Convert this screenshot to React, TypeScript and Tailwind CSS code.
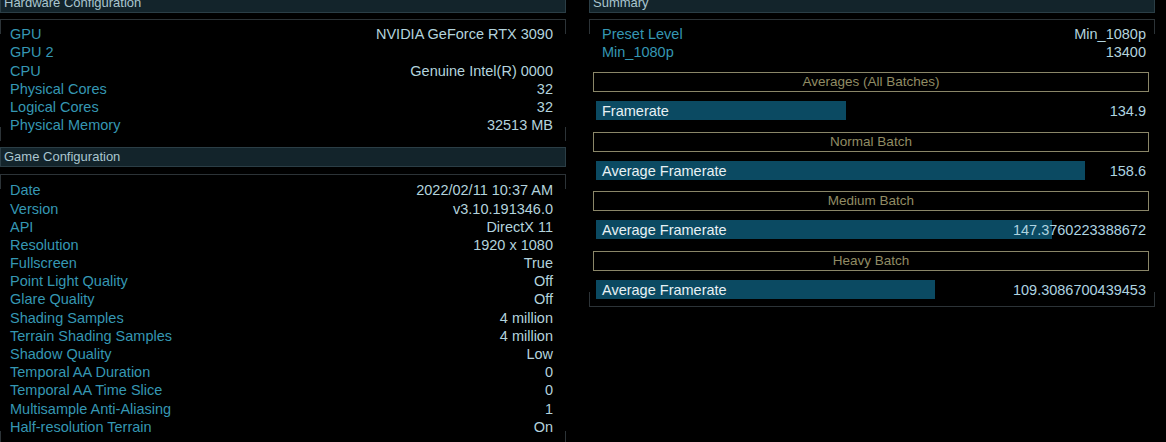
import type { ReactNode } from 'react';

type Row = [string, string];

const hardware: Row[] = [
  ['GPU', 'NVIDIA GeForce RTX 3090'],
  ['GPU 2', ''],
  ['CPU', 'Genuine Intel(R) 0000'],
  ['Physical Cores', '32'],
  ['Logical Cores', '32'],
  ['Physical Memory', '32513 MB'],
];

const game: Row[] = [
  ['Date', '2022/02/11 10:37 AM'],
  ['Version', 'v3.10.191346.0'],
  ['API', 'DirectX 11'],
  ['Resolution', '1920 x 1080'],
  ['Fullscreen', 'True'],
  ['Point Light Quality', 'Off'],
  ['Glare Quality', 'Off'],
  ['Shading Samples', '4 million'],
  ['Terrain Shading Samples', '4 million'],
  ['Shadow Quality', 'Low'],
  ['Temporal AA Duration', '0'],
  ['Temporal AA Time Slice', '0'],
  ['Multisample Anti-Aliasing', '1'],
  ['Half-resolution Terrain', 'On'],
];

const batches = [
  { title: 'Averages (All Batches)', label: 'Framerate', value: '134.9', bar: 'w-[250px]' },
  { title: 'Normal Batch', label: 'Average Framerate', value: '158.6', bar: 'w-[489px]' },
  { title: 'Medium Batch', label: 'Average Framerate', value: '147.3760223388672', bar: 'w-[456px]' },
  { title: 'Heavy Batch', label: 'Average Framerate', value: '109.3086700439453', bar: 'w-[339px]' },
];

const Header = ({ title }: { title: string }) => (
  <div className="h-[20px] border border-[#2b3e46] bg-[#13242b] pl-[3px] text-[13px] leading-[18px] text-[#aac6cf]">
    {title}
  </div>
);

// top edge plus short corner ticks on the sides
const Panel = ({ children, bottom = false }: { children: ReactNode; bottom?: boolean }) => (
  <div
    className={`relative border-t border-[#2c3337] ${bottom ? 'border-b' : ''}
      before:absolute before:left-0 before:top-0 before:h-[14px] before:w-px before:bg-[#2c3337]
      after:absolute after:right-0 after:top-0 after:h-[14px] after:w-px after:bg-[#2c3337]`}
  >
    {children}
    <div className="absolute bottom-0 left-0 h-[14px] w-px bg-[#2c3337]" />
    <div className="absolute bottom-0 right-0 h-[14px] w-px bg-[#2c3337]" />
  </div>
);

const Rows = ({ rows }: { rows: Row[] }) => (
  <div className="flex flex-col">
    {rows.map(([label, value]) => (
      <div key={label} className="flex h-[18.2px] items-center justify-between text-[14.5px]">
        <span className="text-[#3597b3]">{label}</span>
        <span className="text-[#b3d3dd]">{value}</span>
      </div>
    ))}
  </div>
);

export default function App() {
  return (
    <div className="h-[442px] overflow-hidden bg-black font-['Liberation_Sans',Arial,sans-serif]">
      <div className="-mt-[7px] flex gap-[23px] pr-[11px]">
        {/* left column */}
        <div className="flex w-[566px] flex-col">
          <Header title="Hardware Configuration" />
          <div className="mt-[6px]">
            <Panel>
              <div className="pb-[6px] pl-[10px] pr-[13px] pt-[6px]">
                <Rows rows={hardware} />
              </div>
            </Panel>
          </div>
          <div className="mt-[6px]">
            <Header title="Game Configuration" />
          </div>
          <div className="mt-[7px]">
            <Panel>
              <div className="pb-[8px] pl-[10px] pr-[13px] pt-[7px]">
                <Rows rows={game} />
              </div>
            </Panel>
          </div>
        </div>

        {/* right column */}
        <div className="flex w-[566px] flex-col">
          <Header title="Summary" />
          <div className="mt-[6px]">
            <Panel bottom>
              <div className="pb-[7px] pl-[4px] pr-[6px] pt-[6px]">
                <div className="pl-[9px] pr-[3px]">
                  <Rows
                    rows={[
                      ['Preset Level', 'Min_1080p'],
                      ['Min_1080p', '13400'],
                    ]}
                  />
                </div>
                <div className="mt-[10px] flex flex-col">
                  {batches.map((b, i) => (
                    <div key={b.title} className={i > 0 ? 'mt-[11.5px]' : ''}>
                      <div className="flex h-[20px] items-center justify-center border border-[#8a8668] text-[13.5px] text-[#918c64]">
                        {b.title}
                      </div>
                      <div className="mt-[9px] grid h-[19px] pl-[3px] pr-[3px]">
                        <div className={`[grid-area:1/1] h-[19px] bg-[#0b4a62] ${b.bar}`} />
                        <div className="[grid-area:1/1] flex items-center justify-between pl-[6px] text-[14.5px]">
                          <span className="text-[#e8f1f4]">{b.label}</span>
                          <span className="text-[#aed4e0]">{b.value}</span>
                        </div>
                      </div>
                    </div>
                  ))}
                </div>
              </div>
            </Panel>
          </div>
        </div>
      </div>
    </div>
  );
}
